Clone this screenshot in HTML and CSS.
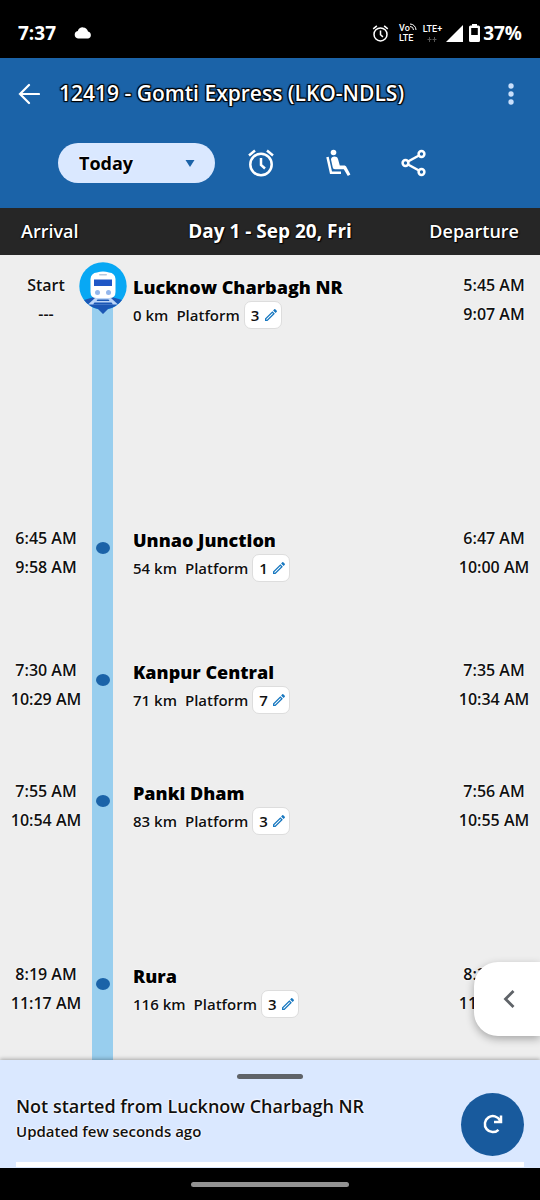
FILE: index.html
```html
<!DOCTYPE html>
<html lang="en">
<head>
    <meta charset="UTF-8">
    <meta name="viewport" content="width=device-width, initial-scale=1.0">
    <title>12419 - Gomti Express</title>
    <link rel="stylesheet" href="styles.css">
</head>
<body>
<svg class="sprite" aria-hidden="true">
    <symbol id="pencil" viewBox="0 0 24 24">
        <path d="M14.06 9l.94.94L5.92 19H5v-.92L14.06 9m3.6-6c-.25 0-.51.1-.7.29l-1.83 1.83 3.75 3.75 1.83-1.83c.39-.39.39-1.04 0-1.41l-2.34-2.34c-.2-.2-.45-.29-.71-.29m-3.6 3.19L3 17.25V21h3.75L17.81 9.94z" fill="currentColor"/>
    </symbol>
    <symbol id="alarm" viewBox="0 0 28 28">
        <g fill="none" stroke="currentColor" stroke-width="2.500">
            <circle cx="14" cy="15.500" r="10.700"/>
            <path d="M14 9v7l4 3.500M2 6.500l6-5M26 6.500l-6-5"/>
        </g>
    </symbol>
</svg>

<div class="status-bar">
    <span class="clock">7:37</span>
    <svg class="cloud" width="18" height="12" viewBox="0 0 18 12"><path d="M4 11.500a3.800 3.800 0 0 1-.2-7.500A5.300 5.300 0 0 1 14 4.500a3.600 3.600 0 0 1 .2 7z" fill="#fff"/></svg>
    <div class="status-icons">
        <svg class="status-alarm" width="17" height="17"><use href="#alarm"/></svg>
        <span class="volte"><span class="vo">Vo<svg width="7" height="7" viewBox="0 0 7 7"><path d="M0 1a6 6 0 0 1 6 6M0 3.500A3.500 3.500 0 0 1 3.500 7" fill="none" stroke="#fff"/></svg></span><span>LTE</span></span>
        <span class="lte"><span>LTE+</span>
            <svg width="10" height="5" viewBox="0 0 10 5"><path d="M2.500 0v5M.5 2.500h4M7.500 0v5M5.500 2.500h4" stroke="#555"/></svg>
        </span>
        <svg width="17" height="17" viewBox="0 0 17 17"><path d="M17 0v17H0z" fill="#fff"/></svg>
        <svg class="battery-icon" width="11" height="18" viewBox="0 0 11 18"><path d="M3 0h5v1.500h1.500q1.500 0 1.500 1.500v13.500q0 1.500-1.500 1.500h-8Q0 18 0 16.500V3q0-1.500 1.500-1.500H3z M2.200 4v7h6.600V4z" fill="#fff" fill-rule="evenodd"/></svg>
        <span class="battery">37%</span>
    </div>
</div>

<header class="header">
    <div class="title-row">
        <button type="button" class="icon-button back" aria-label="Back">
            <svg width="22" height="22" viewBox="0 0 22 22"><path d="M11 2L2 11l9 9M2 11h19" fill="none" stroke="#fff" stroke-width="2.200" stroke-linecap="round"/></svg>
        </button>
        <h1>12419 - Gomti Express (LKO-NDLS)</h1>
        <button type="button" class="icon-button" aria-label="More options">
            <svg width="6" height="22" viewBox="0 0 6 22" fill="#c9dffb"><circle cx="3" cy="3" r="2.700"/><circle cx="3" cy="11" r="2.700"/><circle cx="3" cy="19" r="2.700"/></svg>
        </button>
    </div>
    <div class="actions">
        <div class="day-select">
            <select id="day" name="day" aria-label="Start day">
                <option>Today</option>
                <option>Yesterday</option>
                <option>Tomorrow</option>
            </select>
            <svg class="caret" width="10" height="7" viewBox="0 0 10 7"><path d="M.5 0h9L5 7z" fill="#1b63a8"/></svg>
        </div>
        <button type="button" class="icon-button" aria-label="Alarm">
            <svg width="28" height="28"><use href="#alarm"/></svg>
        </button>
        <button type="button" class="icon-button" aria-label="Seats">
            <svg width="26" height="28" viewBox="0 0 26 28" fill="none" stroke="#fff">
                <circle cx="8.500" cy="3.500" r="2.800" fill="#fff" stroke="none"/>
                <path d="M2.500 8l3.500 15.800h10" stroke-width="2.500"/>
                <path d="M6 10.500c0-3.500 6-4 7-.5l1.800 6.500h4.200c1.300 0 1.900.5 2.400 1.500l4 7.500-2.600 1.500-4-6.800H10c-1.500 0-2-.7-2.300-2z" fill="#fff" stroke="none"/>
            </svg>
        </button>
        <button type="button" class="icon-button" aria-label="Share">
            <svg width="26" height="28" viewBox="0 0 26 28" fill="none" stroke="#fff" stroke-width="2.500">
                <circle cx="4.500" cy="14" r="2.900"/><circle cx="20.500" cy="5" r="2.900"/><circle cx="20.500" cy="23" r="2.900"/>
                <path d="M7 12.500L18 6.500M7 15.500L18 21.500"/>
            </svg>
        </button>
    </div>
</header>

<div class="day-bar">
    <span>Arrival</span>
    <strong>Day 1 - Sep 20, Fri</strong>
    <span>Departure</span>
</div>

<main class="timeline">
    <ol class="stops">
        <!-- min-height is the distance to the next stop -->
        <li class="stop stop-first" style="min-height: 253px">
            <div class="times"><span>Start</span><span>---</span></div>
            <div class="track">
                <svg class="train-pin" width="48" height="52" viewBox="0 0 48 52">
                    <circle cx="24" cy="24" r="23.700" fill="#08a8f4"/>
                    <path d="M15 35h18l10 3A24 24 0 0 1 29 47l-5 5-5-5A24 24 0 0 1 5 38z" fill="#1b57b5"/>
                    <path d="M16 36h16l7 6.500H9z" fill="#bcd5f7"/>
                    <path d="M18.500 37.500h11l1 1.500h-13zM15.500 40.500h17l1.500 2H14z" fill="#1b57b5"/>
                    <path d="M18 10.500q6-2 12 0 6 .5 6.500 6.500v13q0 6-6 6h-13q-6 0-6-6V17q.5-6 6.500-6.500z" fill="#fff"/>
                    <rect x="20" y="12" width="8" height="1.500" rx=".7" fill="#b9c9de"/>
                    <path d="M15 17.500h18v6.500H15z" fill="#1f57c6"/>
                    <circle cx="18.500" cy="30.500" r="2.500" fill="#94b7ec"/><circle cx="29.500" cy="30.500" r="2.500" fill="#94b7ec"/>
                </svg>
            </div>
            <div class="station">
                <h2>Lucknow Charbagh NR</h2>
                <p><span>0 km</span><span>Platform</span><button type="button" class="platform">3<svg width="16" height="16"><use href="#pencil"/></svg></button></p>
            </div>
            <div class="times"><span>5:45 AM</span><span>9:07 AM</span></div>
        </li>
        <li class="stop" style="min-height: 132px">
            <div class="times"><span>6:45 AM</span><span>9:58 AM</span></div>
            <div class="track"><i class="dot"></i></div>
            <div class="station">
                <h2>Unnao Junction</h2>
                <p><span>54 km</span><span>Platform</span><button type="button" class="platform">1<svg width="16" height="16"><use href="#pencil"/></svg></button></p>
            </div>
            <div class="times"><span>6:47 AM</span><span>10:00 AM</span></div>
        </li>
        <li class="stop" style="min-height: 121px">
            <div class="times"><span>7:30 AM</span><span>10:29 AM</span></div>
            <div class="track"><i class="dot"></i></div>
            <div class="station">
                <h2>Kanpur Central</h2>
                <p><span>71 km</span><span>Platform</span><button type="button" class="platform">7<svg width="16" height="16"><use href="#pencil"/></svg></button></p>
            </div>
            <div class="times"><span>7:35 AM</span><span>10:34 AM</span></div>
        </li>
        <li class="stop" style="min-height: 183px">
            <div class="times"><span>7:55 AM</span><span>10:54 AM</span></div>
            <div class="track"><i class="dot"></i></div>
            <div class="station">
                <h2>Panki Dham</h2>
                <p><span>83 km</span><span>Platform</span><button type="button" class="platform">3<svg width="16" height="16"><use href="#pencil"/></svg></button></p>
            </div>
            <div class="times"><span>7:56 AM</span><span>10:55 AM</span></div>
        </li>
        <li class="stop" style="min-height: 140px">
            <div class="times"><span>8:19 AM</span><span>11:17 AM</span></div>
            <div class="track"><i class="dot"></i></div>
            <div class="station">
                <h2>Rura</h2>
                <p><span>116 km</span><span>Platform</span><button type="button" class="platform">3<svg width="16" height="16"><use href="#pencil"/></svg></button></p>
            </div>
            <div class="times"><span>8:20 AM</span><span>11:18 AM</span></div>
        </li>
    </ol>
    <button type="button" class="drawer" aria-label="Open panel">
        <svg width="12" height="20" viewBox="0 0 12 20"><path d="M10.500 2L2.500 10l8 8" fill="none" stroke="#5f6368" stroke-width="2.800"/></svg>
    </button>
</main>

<footer class="sheet">
    <div class="handle"></div>
    <div class="sheet-row">
        <div class="sheet-text">
            <p class="train-status">Not started from Lucknow Charbagh NR</p>
            <p class="updated">Updated few seconds ago</p>
        </div>
        <button type="button" class="refresh" aria-label="Refresh">
            <svg width="20" height="20" viewBox="0 0 20 20" fill="none" stroke="#fff" stroke-width="2.500"><path d="M15.500 15.800A8 8 0 1 1 17 6.500M18 1.500V8h-7"/></svg>
        </button>
    </div>
    <div class="card-edge"></div>
</footer>
<div class="nav-bar"><div class="nav-pill"></div></div>
</body>
</html>
```
FILE: styles.css
```css
* {
    box-sizing: border-box;
}
body {
    margin: 0;
    height: 100vh;
    display: flex;
    flex-direction: column;
    background-color: #eee;
    color: #111;
    font-family: "Open Sans", sans-serif;
    font-size: 15px;
    font-weight: 600;
}
h1, h2, p, ol {
    margin: 0;
    padding: 0;
}
button, select {
    font: inherit;
    color: inherit;
    border: none;
    padding: 0;
    cursor: pointer;
}
svg {
    display: block;
    flex: none;
}
.sprite {
    position: absolute;
    width: 0;
    height: 0;
}

/* status bar */
.status-bar {
    display: flex;
    align-items: center;
    height: 58px;
    padding: 8px 18px 0;
    background-color: #000;
    color: #fff;
}
.clock, .battery {
    font-size: 19px;
    font-weight: 700;
}
.cloud {
    margin-left: 18px;
}
.status-icons {
    display: flex;
    align-items: center;
    gap: 6px;
    margin-left: auto;
}
.status-alarm {
    margin-right: 4px;
}
.volte, .lte {
    display: flex;
    flex-direction: column;
    font-family: Roboto, sans-serif;
    font-size: 9px;
    line-height: 10px;
    font-weight: 500;
}
.lte {
    align-items: center;
    gap: 3px;
    margin-right: -2px;
}
.vo {
    display: flex;
}
.battery-icon {
    margin-right: -3px;
}

/* header */
.header {
    background-color: #1b63a8;
    color: #fff;
    height: 150px;
}
.title-row {
    display: flex;
    align-items: center;
    height: 72px;
    padding: 0 26px 0 18px;
}
.icon-button {
    display: flex;
    background: none;
    color: #fff;
}
h1 {
    flex: 1;
    margin-left: 19px;
    padding-bottom: 2px;
    font-size: 21px;
    font-weight: 600;
    white-space: nowrap;
    text-shadow: 1px 1px 1px #000, -1px -1px 1px #000, 1px -1px 1px #000, -1px 1px 1px #000, 0 0 2px #000;
}
.actions {
    display: flex;
    align-items: center;
    height: 66px;
    padding-left: 58px;
    gap: 50px;
}
.day-select {
    position: relative;
    width: 157px;
    margin-right: -18px;
}
.day-select select {
    width: 100%;
    height: 40px;
    padding-left: 21px;
    border-radius: 20px;
    background-color: #dae8ff;
    color: #000;
    font-size: 18px;
    font-weight: 700;
    appearance: none;
    text-shadow: 0 0 2px #fff, 0 0 2px #fff;
}
.caret {
    position: absolute;
    right: 20px;
    top: 17px;
    pointer-events: none;
}

/* day heading */
.day-bar {
    display: grid;
    grid-template-columns: 1fr auto 1fr;
    align-items: center;
    height: 47px;
    padding: 0 21px 2px;
    background-color: #262626;
    color: #fff;
    font-size: 18px;
    text-shadow: 0 0 2px #000, 1px 1px 1px #000;
}
.day-bar strong {
    font-size: 19px;
    font-weight: 700;
}
.day-bar span:last-child {
    text-align: right;
}

/* stops */
.timeline {
    position: relative;
    flex: 1;
    min-height: 0;
    overflow: hidden;
}
.stops {
    height: 100%;
    overflow: hidden;
    list-style: none;
}
.stop {
    display: grid;
    grid-template-columns: 92px 21px 1fr 92px;
    text-shadow: 0 0 2px #fff, 0 0 2px #fff;
}
.times {
    display: flex;
    flex-direction: column;
    align-items: center;
    padding-top: 16px;
    font-size: 16px;
    line-height: 29px;
}
.track {
    display: flex;
    justify-content: center;
    background-color: #98ceee;
}
.stop-first .track {
    margin-top: 30px;
}
.train-pin {
    margin: -23px -14px 0;
}
.dot {
    width: 14px;
    height: 12px;
    margin-top: 34px;
    border-radius: 50%;
    background-color: #1b63a8;
}
.station {
    padding: 18px 0 0 20px;
    line-height: 28px;
}
.station h2 {
    color: #000;
    font-size: 18px;
    font-weight: 800;
}
.station p {
    display: flex;
    align-items: center;
    height: 28px;
    gap: 8px;
}
.platform {
    display: flex;
    align-items: center;
    justify-content: space-between;
    width: 38px;
    height: 28px;
    margin-left: -4px;
    padding: 0 2px 0 6px;
    border: 1px solid #ddd;
    border-radius: 7px;
    background-color: #fff;
}
.platform svg {
    color: #1878c0;
}
.drawer {
    position: absolute;
    right: 0;
    bottom: 24px;
    display: flex;
    align-items: center;
    justify-content: center;
    width: 66px;
    height: 74px;
    padding-left: 4px;
    border-radius: 24px 0 0 24px;
    background-color: #fff;
    box-shadow: 0 3px 8px rgba(0, 0, 0, 0.3);
}

/* bottom sheet */
.sheet {
    position: relative;
    padding: 14px 16px 1px;
    background-color: #dae8ff;
    box-shadow: 0 -1px 4px rgba(0, 0, 0, 0.3);
}
.handle {
    width: 66px;
    height: 5px;
    margin: 0 auto;
    border-radius: 3px;
    background-color: #5f6368;
}
.sheet-row {
    display: flex;
    align-items: center;
    justify-content: space-between;
    height: 83px;
    padding-top: 7px;
}
.sheet-text {
    padding-bottom: 12px;
    text-shadow: 0 0 2px #fff, 0 0 2px #fff, 0 0 2px #fff;
}
.train-status {
    font-size: 18px;
    line-height: 26px;
}
.updated {
    line-height: 24px;
}
.refresh {
    display: flex;
    align-items: center;
    justify-content: center;
    width: 63px;
    height: 63px;
    border-radius: 50%;
    background-color: #185a9d;
}
.card-edge {
    height: 5px;
    background-color: #fff;
}
.nav-bar {
    position: relative;
    display: flex;
    align-items: center;
    justify-content: center;
    height: 32px;
    background-color: #000;
}
.nav-pill {
    width: 158px;
    height: 5px;
    border-radius: 3px;
    background-color: #929292;
}
```
